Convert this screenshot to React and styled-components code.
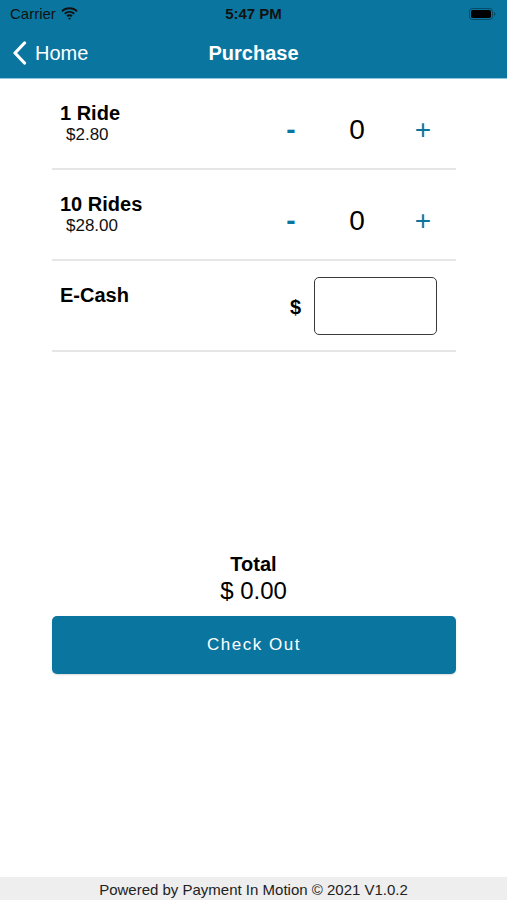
import React from "react";
import styled, { createGlobalStyle } from "styled-components";

const Global = createGlobalStyle`
  html, body { margin: 0; padding: 0; background: #fff; }
  body { font-family: "Liberation Sans", Arial, sans-serif; }
  * { box-sizing: border-box; }
`;

const BLUE = "#0a76a0";

const Page = styled.div`
  min-height: 100vh;
  display: flex;
  flex-direction: column;
`;

const Header = styled.header`
  background: ${BLUE};
  border-bottom: 1px solid #8cc6dc;
  height: 79px;
  display: flex;
  flex-direction: column;
`;

const StatusBar = styled.div`
  height: 27px;
  display: grid;
  grid-template-columns: 1fr auto 1fr;
  align-items: center;
  padding: 0 10px;
  color: #111;
  font-size: 15px;
`;

const Carrier = styled.div`
  display: flex;
  align-items: center;
  gap: 5px;
`;

const Time = styled.div`
  font-weight: 700;
  font-size: 15px;
`;

const Battery = styled.div`
  justify-self: end;
  display: flex;
  align-items: center;
  padding-right: 1px;
`;

const NavBar = styled.div`
  flex: 1;
  display: grid;
  grid-template-columns: 1fr auto 1fr;
  align-items: center;
  color: #fff;
  padding: 1px 12px 0;
`;

const Back = styled.div`
  display: flex;
  align-items: center;
  gap: 8px;
  font-size: 20px;
`;

const Title = styled.div`
  font-size: 20px;
  font-weight: 700;
`;

const List = styled.div`
  margin: 0 51px 0 52px;
`;

const Row = styled.div`
  height: 91px;
  border-bottom: 2px solid #e6e6e6;
  display: flex;
  justify-content: space-between;
  align-items: flex-start;
  padding: 22px 0 0 8px;
`;

const ItemInfo = styled.div`
  display: flex;
  flex-direction: column;
`;

const ItemName = styled.div`
  font-size: 20px;
  font-weight: 700;
  line-height: 24px;
  color: #000;
`;

const ItemPrice = styled.div`
  font-size: 17px;
  line-height: 20px;
  margin-left: 6px;
  color: #111;
`;

const Stepper = styled.div`
  display: grid;
  grid-template-columns: repeat(3, 66px);
  align-items: center;
  justify-items: center;
  height: 36px;
  margin-top: 11px;
`;

const StepBtn = styled.button`
  background: none;
  border: none;
  padding: 0;
  font-family: inherit;
  color: ${BLUE};
  font-size: ${(p) => p.$size}px;
  font-weight: ${(p) => p.$weight || 400};
  line-height: 1;
`;

const Count = styled.div`
  font-size: 28px;
  color: #000;
`;

const CashEntry = styled.div`
  display: flex;
  align-items: center;
  gap: 13px;
  margin-top: -6px;
  margin-right: 19px;
`;

const Dollar = styled.div`
  font-size: 20px;
  font-weight: 700;
  color: #000;
  padding-top: 2px;
`;

const CashInput = styled.input`
  width: 123px;
  height: 58px;
  border: 1.5px solid #3a3a3a;
  border-radius: 5px;
  font-size: 20px;
  font-family: inherit;
  padding: 0 8px;
  outline: none;
`;

const Summary = styled.div`
  margin-top: 200px;
  display: flex;
  flex-direction: column;
  align-items: center;
`;

const TotalLabel = styled.div`
  font-size: 20px;
  font-weight: 700;
  line-height: 25px;
  color: #000;
`;

const TotalValue = styled.div`
  font-size: 24px;
  line-height: 28px;
  color: #000;
`;

const CheckOut = styled.button`
  margin: 11px 51px 0 52px;
  height: 58px;
  background: ${BLUE};
  border: none;
  border-radius: 5px;
  color: #fff;
  font-family: inherit;
  font-size: 17px;
  letter-spacing: 1.5px;
  box-shadow: 0 1px 2px rgba(0, 0, 0, 0.15);
`;

const Footer = styled.footer`
  margin-top: auto;
  height: 23px;
  background: #eeeeee;
  display: flex;
  align-items: center;
  justify-content: center;
  font-size: 15px;
  color: #222;
  padding-top: 1px;
`;

const Wifi = () => (
  <svg width="17" height="13" viewBox="0 0 17 13">
    <path d="M8.5 2.2c2.6 0 5 1 6.8 2.7l1.3-1.4C14.5 1.5 11.6.3 8.5.3S2.5 1.5.4 3.5l1.3 1.4C3.5 3.2 5.9 2.2 8.5 2.2z" fill="#111" />
    <path d="M8.5 5.8c1.6 0 3 .6 4.1 1.6l1.3-1.4C12.5 4.7 10.6 3.9 8.5 3.9S4.5 4.7 3.1 6l1.3 1.4c1.1-1 2.5-1.6 4.1-1.6z" fill="#111" />
    <path d="M8.5 9.3c.7 0 1.3.3 1.7.7l1.4-1.4c-.8-.8-1.9-1.3-3.1-1.3S6.2 7.8 5.4 8.6L6.8 10c.4-.4 1-.7 1.7-.7zM8.5 12.8l1.5-1.5c-.4-.4-.9-.6-1.5-.6s-1.1.2-1.5.6z" fill="#111" />
  </svg>
);

const BatteryIcon = () => (
  <svg width="27" height="12" viewBox="0 0 27 12">
    <rect x="0.5" y="0.5" width="23" height="11" rx="3" fill="none" stroke="rgba(0,0,0,0.35)" />
    <rect x="2" y="2" width="20" height="8" rx="1.8" fill="#000" />
    <path d="M25 4v4c.8-.3 1.3-1.1 1.3-2S25.8 4.3 25 4z" fill="rgba(0,0,0,0.4)" />
  </svg>
);

const Chevron = () => (
  <svg width="15" height="24" viewBox="0 0 15 24">
    <path d="M12.5 2 L3 12 L12.5 22" fill="none" stroke="#fff" strokeWidth="3.2" strokeLinecap="round" strokeLinejoin="round" />
  </svg>
);

const items = [
  { name: "1 Ride", price: "$2.80" },
  { name: "10 Rides", price: "$28.00" },
];

export default function App() {
  return (
    <>
      <Global />
      <Page>
        <Header>
          <StatusBar>
            <Carrier>
              Carrier <Wifi />
            </Carrier>
            <Time>5:47 PM</Time>
            <Battery>
              <BatteryIcon />
            </Battery>
          </StatusBar>
          <NavBar>
            <Back>
              <Chevron />
              Home
            </Back>
            <Title>Purchase</Title>
            <div />
          </NavBar>
        </Header>
        <List>
          {items.map((it) => (
            <Row key={it.name}>
              <ItemInfo>
                <ItemName>{it.name}</ItemName>
                <ItemPrice>{it.price}</ItemPrice>
              </ItemInfo>
              <Stepper>
                <StepBtn $size={28} $weight={700}>-</StepBtn>
                <Count>0</Count>
                <StepBtn $size={28}>+</StepBtn>
              </Stepper>
            </Row>
          ))}
          <Row>
            <ItemInfo>
              <ItemName>E-Cash</ItemName>
            </ItemInfo>
            <CashEntry>
              <Dollar>$</Dollar>
              <CashInput />
            </CashEntry>
          </Row>
        </List>
        <Summary>
          <TotalLabel>Total</TotalLabel>
          <TotalValue>$ 0.00</TotalValue>
        </Summary>
        <CheckOut>Check Out</CheckOut>
        <Footer>Powered by Payment In Motion © 2021 V1.0.2</Footer>
      </Page>
    </>
  );
}
